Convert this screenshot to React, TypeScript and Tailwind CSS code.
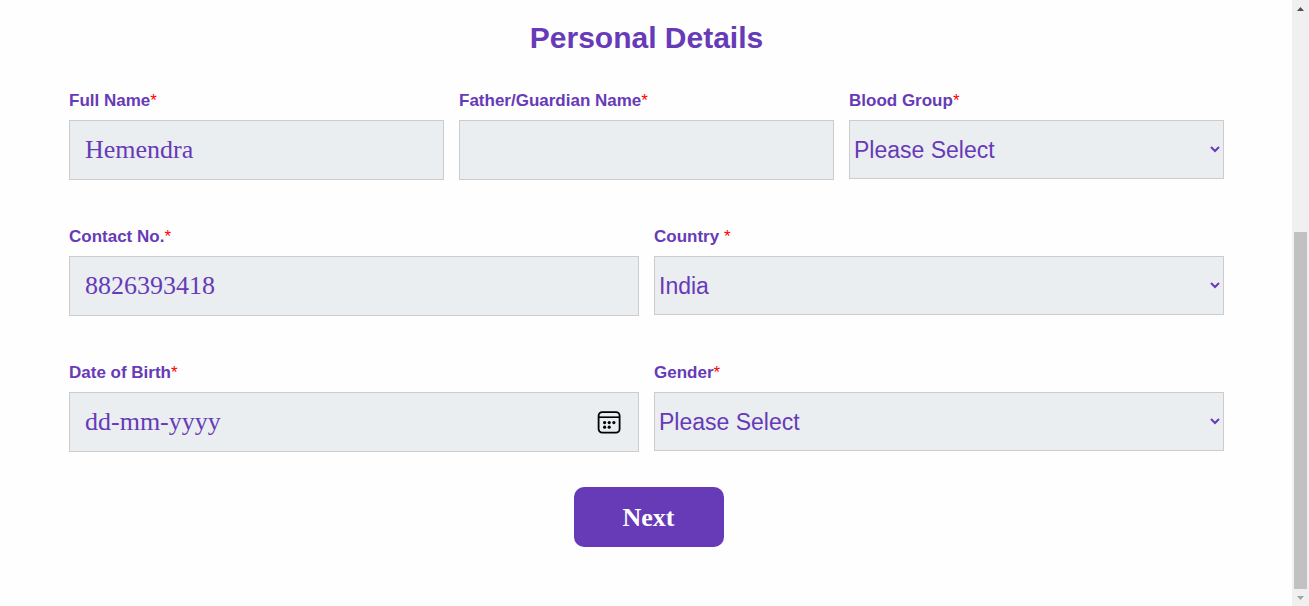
import type { ReactNode } from "react";

const inputStyle =
  "h-[60px] w-full rounded-none border border-[#cccccc] bg-[#eaeef1] px-[15px] font-['Liberation_Serif',serif] text-[26px] text-[#673ab7] outline-none placeholder:text-[#673ab7] placeholder:opacity-100";

const selectStyle =
  "h-[59px] w-full rounded-none border border-[#cccccc] bg-[#eaeef1] text-[23px] text-[#673ab7] outline-none";

type FieldProps = { id: string; label: string; children: ReactNode };

function Field({ id, label, children }: FieldProps) {
  return (
    <div className="flex min-w-0 flex-col gap-[9px]">
      <label htmlFor={id} className="text-[17px] leading-5 font-bold text-[#673ab7]">
        {label}
        <span className="font-normal text-[#ff0000]">*</span>
      </label>
      {children}
    </div>
  );
}

function CalendarIcon() {
  return (
    <svg viewBox="0 0 24 24" className="size-6" fill="none" stroke="black" strokeWidth="1.8" aria-hidden="true">
      <rect x="1.6" y="2.1" width="21" height="20.6" rx="3.6" />
      <path d="M1.6 7.2h21" strokeWidth="1.6" />
      <g fill="black" stroke="none">
        <circle cx="7.6" cy="12.6" r="1.6" />
        <circle cx="12.2" cy="12.6" r="1.6" />
        <circle cx="16.9" cy="12.6" r="1.6" />
        <circle cx="7.6" cy="17.2" r="1.6" />
        <circle cx="12.2" cy="17.2" r="1.6" />
      </g>
    </svg>
  );
}

function ScrollRail() {
  return (
    <div aria-hidden="true" className="sticky top-0 flex h-screen w-[17px] shrink-0 flex-col items-center bg-[#f0f0f0]">
      <div className="flex h-[17px] items-center">
        <svg width="7" height="4" viewBox="0 0 7 4" fill="#505050">
          <path d="M3.5 0 7 4H0Z" />
        </svg>
      </div>
      <div className="flex w-full flex-1 flex-col px-0.5">
        <div className="grow-[215]" />
        <div className="grow-[357] bg-[#c1c1c1]" />
      </div>
      <div className="flex h-[17px] items-center">
        <svg width="7" height="4" viewBox="0 0 7 4" fill="#a3a3a3">
          <path d="M0 0H7L3.5 4Z" />
        </svg>
      </div>
    </div>
  );
}

export default function App() {
  return (
    <div className="flex min-h-screen bg-[#fefefe] font-['Liberation_Sans',Arial,sans-serif]">
      <main className="min-w-0 flex-1 pt-[18px] pr-[68px] pb-10 pl-[69px]">
        <h1 className="text-center text-[30px] leading-10 font-bold text-[#673ab7]">Personal Details</h1>
        <form className="mt-[33px]" onSubmit={(event) => event.preventDefault()}>
          <div className="flex flex-col gap-[47px]">
            <div className="grid grid-cols-3 gap-[15px]">
              <Field id="full-name" label="Full Name">
                <input id="full-name" type="text" defaultValue="Hemendra" className={inputStyle} />
              </Field>
              <Field id="guardian-name" label="Father/Guardian Name">
                <input id="guardian-name" type="text" className={inputStyle} />
              </Field>
              <Field id="blood-group" label="Blood Group">
                <select id="blood-group" className={selectStyle}>
                  <option>Please Select</option>
                </select>
              </Field>
            </div>
            <div className="grid grid-cols-2 gap-[15px]">
              <Field id="contact" label="Contact No.">
                <input id="contact" type="tel" defaultValue="8826393418" className={inputStyle} />
              </Field>
              <Field id="country" label="Country ">
                <select id="country" className={selectStyle}>
                  <option>India</option>
                </select>
              </Field>
            </div>
            <div className="grid grid-cols-2 gap-[15px]">
              <Field id="birth-date" label="Date of Birth">
                <div className="relative">
                  <input id="birth-date" type="text" placeholder="dd-mm-yyyy" className={inputStyle} />
                  <button
                    type="button"
                    aria-label="Choose date"
                    className="absolute inset-y-0 right-[18px] flex items-center"
                  >
                    <CalendarIcon />
                  </button>
                </div>
              </Field>
              <Field id="gender" label="Gender">
                <select id="gender" className={selectStyle}>
                  <option>Please Select</option>
                </select>
              </Field>
            </div>
          </div>
          <div className="mt-[35px] flex justify-center pl-1">
            <button
              type="submit"
              className="h-[60px] w-[150px] rounded-[10px] bg-[#673ab7] font-['Liberation_Serif',serif] text-[26px] font-bold text-white"
            >
              Next
            </button>
          </div>
        </form>
      </main>
      <ScrollRail />
    </div>
  );
}
